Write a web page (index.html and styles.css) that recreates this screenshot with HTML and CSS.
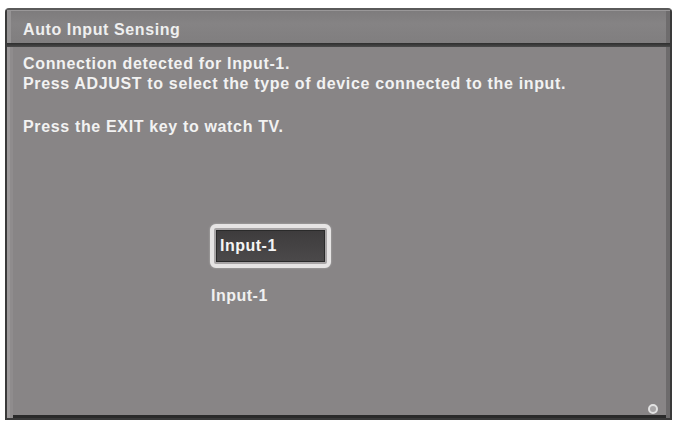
FILE: index.html
```html
<!DOCTYPE html>
<html>
<head>
<meta charset="utf-8">
<link rel="stylesheet" href="styles.css">
</head>
<body>
<div class="frame">
  <div class="header">Auto Input Sensing</div>
  <div class="sep"></div>
  <div class="content">
    <p class="line">Connection detected for Input-1.</p>
    <p class="line">Press ADJUST to select the type of device connected to the input.</p>
    <p class="line gap">Press the EXIT key to watch TV.</p>
    <div class="select">
      <div class="box"><span>Input-1</span></div>
      <div class="label">Input-1</div>
    </div>
    <div class="badge"></div>
  </div>
</div>
</body>
</html>
```
FILE: styles.css
```css
html, body {
  margin: 0;
  padding: 0;
  background: #ffffff;
}
body {
  width: 676px;
  height: 423px;
  overflow: hidden;
  font-family: "Liberation Sans", Arial, sans-serif;
}
.frame {
  margin: 8px 4px 0 5px;
  height: 412px;
  box-sizing: border-box;
  border: 2px solid #3a3a3a;
  border-top-color: #5a5a5a;
  border-radius: 4px 4px 0 0;
  background: #888586;
  display: flex;
  flex-direction: column;
}
.header {
  height: 33px;
  box-sizing: border-box;
  padding: 8px 0 0 16px;
  font-weight: bold;
  font-size: 16px;
  letter-spacing: 0.6px;
  color: #efefef;
  line-height: 22px;
  background: linear-gradient(#7e7c7d, #858384 40%, #807e7f);
  border-top: 1px solid #9a9899;
  box-shadow: inset 4px 0 0 #959394, inset -4px 0 0 #6e6c6d;
}
.sep {
  height: 4px;
  background: linear-gradient(#2e2e2e, #4a4a4a);
}
.content {
  flex: 1;
  position: relative;
  padding: 7px 0 0 16px;
  box-shadow: inset 3px 0 0 #9c999a, inset 6px 0 0 #8f8c8d, inset -4px 0 0 #6d6b6c, inset 0 -3px 0 #2a2a2a;
}
.line {
  margin: 0;
  font-weight: bold;
  font-size: 16px;
  letter-spacing: 0.65px;
  line-height: 20px;
  color: #f2f2f2;
}
.gap {
  margin-top: 23px;
}
.select {
  margin: 87px 0 0 187px;
  display: flex;
  flex-direction: column;
  gap: 19px;
}
.box {
  width: 121px;
  height: 44px;
  box-sizing: border-box;
  border: 4px solid #e6e4e4;
  border-radius: 6px;
  padding: 2px;
  background: #a8a5a6;
  box-shadow: 0 0 2px #bbb;
}
.box span {
  display: flex;
  align-items: center;
  height: 100%;
  box-sizing: border-box;
  padding-left: 3px;
  background: linear-gradient(#3e3c3d, #4b494a);
  color: #f4f4f4;
  font-weight: bold;
  font-size: 16px;
  letter-spacing: 0.5px;
  border: 1px solid #2a2a2a;
}
.label {
  padding-left: 1px;
  font-weight: bold;
  font-size: 16px;
  letter-spacing: 0.5px;
  line-height: 18px;
  color: #f0f0f0;
}
.badge {
  position: absolute;
  right: 12px;
  bottom: 4px;
  width: 6px;
  height: 6px;
  border-radius: 50%;
  background: #a9a7a8;
  border: 2px solid #e2e2e2;
}
```
